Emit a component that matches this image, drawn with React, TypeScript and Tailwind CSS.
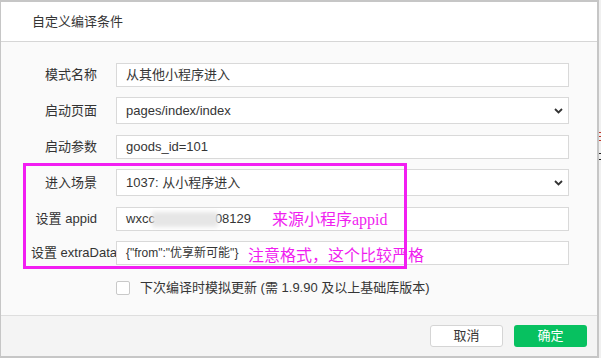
import React from "react";

const font = { fontFamily: '"Liberation Sans", "Noto Sans CJK SC", sans-serif' };

function Chevron() {
  return (
    <svg width="9" height="6" viewBox="0 0 9 6" className="mr-[5px]">
      <polyline points="1,1 4.5,4.5 8,1" fill="none" stroke="#333" strokeWidth="1.8" />
    </svg>
  );
}

function Row({ label, children, h, mt }: { label: string; children: React.ReactNode; h: string; mt: string }) {
  return (
    <div className={`flex items-center ${mt}`}>
      <div className="w-[66px] whitespace-nowrap text-right text-[13px] text-[#333]">{label}</div>
      <div
        className={`ml-[19px] flex w-[453px] ${h} items-center justify-between border border-[#d9d9d9] bg-white pl-[9px] text-[13px] text-[#353535]`}
      >
        {children}
      </div>
    </div>
  );
}

export default function App() {
  return (
    <div className="flex h-[358px] w-[601px] bg-white" style={font}>
      <div className="relative flex h-[358px] w-[599px] flex-col border-t-2 border-r-2 border-b-2 border-l border-[#c6c6c6]">
        {/* header */}
        <div className="flex h-[40px] items-center border-b border-[#d6d6d6] bg-white pl-[31px] text-[13px] text-[#353535]">
          自定义编译条件
        </div>

        {/* body */}
        <div className="flex-1 bg-[#fafafa] pl-[30px] pt-[21px]">
          <Row label="模式名称" h="h-[24px]" mt="">
            从其他小程序进入
          </Row>
          <Row label="启动页面" h="h-[27px]" mt="mt-[10px]">
            <span>pages/index/index</span>
            <Chevron />
          </Row>
          <Row label="启动参数" h="h-[24px]" mt="mt-[11px]">
            goods_id=101
          </Row>
          <Row label="进入场景" h="h-[27px]" mt="mt-[10px]">
            <span>1037: 从小程序进入</span>
            <Chevron />
          </Row>
          <Row label="设置 appid" h="h-[24px]" mt="mt-[11px]">
            <span className="relative flex items-center">
              wxcc
              <span className="-ml-[3px] h-[15px] w-[66px] bg-[#e6e6e6] blur-[2px]" />
              <span className="-ml-[3px]">08129</span>
            </span>
          </Row>
          <Row label="设置 extraData" h="h-[24px]" mt="mt-[10px]">
            <span className="text-[12px]">{'{"from":"优享新可能"}'}</span>
          </Row>
          <div className="mt-[13px] ml-[85px] flex items-center">
            <div className="h-[14px] w-[14px] rounded-[2px] border border-[#c9c9c9] bg-white" />
            <span className="ml-[10px] text-[13px] text-[#353535]">
              下次编译时模拟更新 (需 1.9.90 及以上基础库版本)
            </span>
          </div>
        </div>

        {/* footer */}
        <div className="flex h-[41px] items-center justify-end gap-[11px] border-t border-[#dedede] bg-[#f4f4f4] pr-[10px]">
          <button className="h-[22px] w-[73px] rounded-[3px] border border-[#d5d5d5] bg-white text-[13px] text-[#353535]">
            取消
          </button>
          <button className="h-[22px] w-[73px] rounded-[3px] bg-[#07c160] text-[13px] text-white">确定</button>
        </div>

        {/* annotation overlay */}
        <div className="absolute top-[161px] left-[22px] h-[106px] w-[384px] border-[3px] border-[#f21ef2]" />
        <div
          className="absolute top-[206px] left-[271px] text-[16px] text-[#f01ef0]"
          style={{ fontFamily: '"Liberation Serif", "Noto Sans CJK SC", serif' }}
        >
          来源小程序appid
        </div>
        <div className="absolute top-[240px] left-[247px] text-[16px] text-[#f01ef0]" style={{ fontFamily: '"Noto Sans CJK SC", sans-serif' }}>
          注意格式，这个比较严格
        </div>
      </div>

      {/* sliver of window behind */}
      <div className="flex w-[2px] flex-col bg-[#f0f0f0] pt-[132px]">
        <div className="h-[1px] bg-[#c0392b]" />
        <div className="mt-[3px] h-[1px] bg-[#c0392b]" />
        <div className="mt-[3px] h-[1px] bg-[#c0392b]" />
        <div className="mt-[12px] h-[1px] bg-[#222]" />
        <div className="mt-[5px] h-[1px] bg-[#222]" />
      </div>
    </div>
  );
}
